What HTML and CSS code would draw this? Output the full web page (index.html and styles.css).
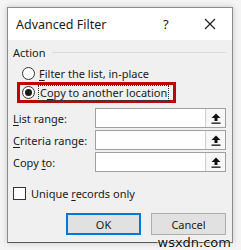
FILE: index.html
```html
<!DOCTYPE html>
<html lang="en">
<head>
    <meta charset="UTF-8">
    <title>Advanced Filter</title>
    <link rel="stylesheet" href="styles.css">
</head>
<body>

<div class="dialog">
    <div class="titlebar">
        <span class="title">Advanced Filter</span>
        <span class="help">?</span>
        <span class="close">
            <svg width="12" height="12" viewBox="0 0 12 12">
                <path d="M1 1 L11 11 M11 1 L1 11" stroke="#1a1a1a" stroke-width="1.1" fill="none"/>
            </svg>
        </span>
    </div>

    <div class="content">
        <div class="group-head">
            <span>Action</span>
            <span class="rule"></span>
        </div>

        <div class="option">
            <span class="radio"></span>
            <span class="label"><u>F</u>ilter the list, in-place</span>
        </div>
        <div class="option marked">
            <span class="radio checked"></span>
            <span class="label focus">C<u>o</u>py to another location</span>
        </div>

        <div class="fields">
            <div class="field">
                <span class="field-name"><u>L</u>ist range:</span>
                <span class="range">
                    <span class="range-input"></span>
                    <span class="range-btn">
                        <svg width="10" height="11" viewBox="0 0 10 11">
                            <path d="M5 0.5 L9.5 5 L6.5 5 L6.5 8 L3.5 8 L3.5 5 L0.5 5 Z" fill="#111"/>
                            <rect x="0.5" y="9.5" width="9" height="1.3" fill="#111"/>
                        </svg>
                    </span>
                </span>
            </div>
            <div class="field">
                <span class="field-name"><u>C</u>riteria range:</span>
                <span class="range">
                    <span class="range-input"></span>
                    <span class="range-btn">
                        <svg width="10" height="11" viewBox="0 0 10 11">
                            <path d="M5 0.5 L9.5 5 L6.5 5 L6.5 8 L3.5 8 L3.5 5 L0.5 5 Z" fill="#111"/>
                            <rect x="0.5" y="9.5" width="9" height="1.3" fill="#111"/>
                        </svg>
                    </span>
                </span>
            </div>
            <div class="field">
                <span class="field-name">Copy <u>t</u>o:</span>
                <span class="range">
                    <span class="range-input"></span>
                    <span class="range-btn">
                        <svg width="10" height="11" viewBox="0 0 10 11">
                            <path d="M5 0.5 L9.5 5 L6.5 5 L6.5 8 L3.5 8 L3.5 5 L0.5 5 Z" fill="#111"/>
                            <rect x="0.5" y="9.5" width="9" height="1.3" fill="#111"/>
                        </svg>
                    </span>
                </span>
            </div>
        </div>

        <div class="check-row">
            <span class="checkbox"></span>
            <span class="label">Unique <u>r</u>ecords only</span>
        </div>

        <div class="buttons">
            <span class="btn default">OK</span>
            <span class="btn">Cancel</span>
        </div>
    </div>
</div>

<span class="watermark">wsxdn.com</span>

</body>
</html>
```

FILE: styles.css
```css
* {
    margin: 0;
    padding: 0;
    box-sizing: border-box;
}

body {
    width: 241px;
    height: 250px;
    overflow: hidden;
    background: #f4f4f4;
    font-family: "Noto Sans", "Open Sans", sans-serif;
    font-size: 11px;
    color: #1a1a1a;
    position: relative;
    padding: 7px 0 0 7px;
    white-space: nowrap;
}

.dialog {
    width: 226px;
    height: 236px;
    background: #f0f0f0;
    border: 1px solid #8c8c8c;
    border-bottom-color: #5a5a5a;
    box-shadow: 0 0 6px rgba(0, 0, 0, 0.18);
}

.titlebar {
    height: 32px;
    background: #ffffff;
    display: flex;
    align-items: center;
    padding-left: 8px;
}

.title {
    flex: 1;
    font-size: 12.5px;
}

.help {
    width: 20px;
    font-size: 13px;
    margin-right: 21px;
}

.close {
    display: flex;
    width: 28px;
}

.content {
    padding: 5px 6px 0 5px;
}

.group-head {
    height: 14px;
    display: flex;
    align-items: center;
}

.rule {
    flex: 1;
    margin-left: 6px;
    border-top: 1px solid #dadada;
}

.option {
    height: 14px;
    margin-top: 7px;
    margin-left: 9px;
    display: flex;
    align-items: center;
    gap: 4px;
}

.option.marked {
    width: 159px;
    height: 21px;
    margin-top: 2px;
    margin-left: 4px;
    padding-left: 2px;
    border: 3px solid #c00000;
}

.radio {
    width: 13px;
    height: 13px;
    border: 1px solid #333333;
    border-radius: 50%;
    background: #ffffff;
    display: flex;
    align-items: center;
    justify-content: center;
}

.radio.checked::after {
    content: "";
    width: 7px;
    height: 7px;
    border-radius: 50%;
    background: #1a1a1a;
}

.label u,
.field-name u {
    text-decoration-thickness: 1px;
    text-underline-offset: 2px;
}

.focus {
    outline: 1px dotted #333333;
    padding: 0 1px;
    line-height: 14px;
}

.fields {
    margin-top: 5px;
    display: flex;
    flex-direction: column;
    gap: 2px;
}

.field {
    height: 20px;
    display: flex;
    align-items: center;
    justify-content: space-between;
}

.range {
    width: 131px;
    height: 20px;
    display: flex;
    border: 1px solid #a0a0a0;
    background: #ffffff;
}

.range-input {
    flex: 1;
}

.range-btn {
    width: 20px;
    border-left: 1px solid #d0d0d0;
    background: #f7f7f7;
    display: flex;
    align-items: center;
    justify-content: center;
}

.check-row {
    margin-top: 15px;
    height: 13px;
    display: flex;
    align-items: center;
    gap: 5px;
}

.checkbox {
    width: 13px;
    height: 13px;
    border: 1px solid #333333;
    background: #ffffff;
}

.buttons {
    margin-top: 13px;
    display: flex;
    justify-content: flex-end;
    gap: 10px;
}

.btn {
    width: 75px;
    height: 22px;
    border: 1px solid #adadad;
    background: #e1e1e1;
    display: flex;
    align-items: center;
    justify-content: center;
}

.btn.default {
    border: 2px solid #0078d7;
}

.watermark {
    position: absolute;
    right: 10px;
    bottom: 0;
    font-family: "DejaVu Sans", sans-serif;
    font-size: 13px;
    line-height: 14px;
    color: #111111;
    text-shadow: 0 0 2px #ffffff, 0 0 2px #ffffff;
}
```
